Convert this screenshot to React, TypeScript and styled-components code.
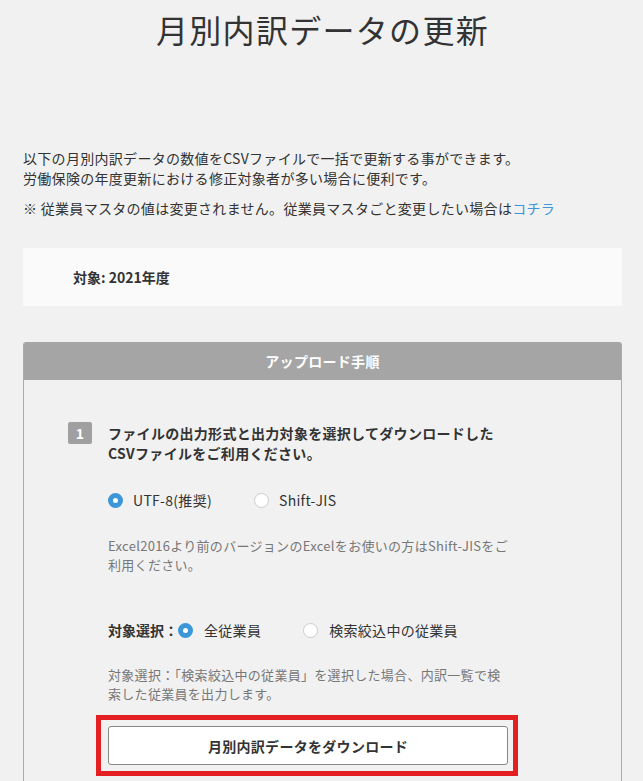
import styled, { createGlobalStyle } from "styled-components";

const GlobalStyle = createGlobalStyle`
  html, body {
    margin: 0;
    padding: 0;
    background-color: #f1f1f1;
  }
  body {
    font-family: "Noto Sans CJK JP", "Noto Sans", sans-serif;
    color: #333333;
    letter-spacing: 0.3px;
  }
  * {
    box-sizing: border-box;
  }
`;

function App() {
  return (
    <>
      <GlobalStyle />
      <Page>
        <Title>月別内訳データの更新</Title>
        <Lead>
          以下の月別内訳データの数値をCSVファイルで一括で更新する事ができます。
          <br />
          労働保険の年度更新における修正対象者が多い場合に便利です。
        </Lead>
        <Note>
          ※ 従業員マスタの値は変更されません。従業員マスタごと変更したい場合は
          <Link href="#">コチラ</Link>
        </Note>
        <Target>対象: 2021年度</Target>
        <Panel>
          <PanelHeader>アップロード手順</PanelHeader>
          <PanelBody>
            <Step>
              <StepNo>1</StepNo>
              <StepContent>
                <StepTitle>
                  ファイルの出力形式と出力対象を選択してダウンロードしたCSVファイルをご利用ください。
                </StepTitle>
                <RadioRow $top={27}>
                  <Choice $gap={42}>
                    <Radio type="radio" name="enc" defaultChecked />
                    UTF-8(推奨)
                  </Choice>
                  <Choice>
                    <Radio type="radio" name="enc" />
                    Shift-JIS
                  </Choice>
                </RadioRow>
                <Help $top={26}>
                  Excel2016より前のバージョンのExcelをお使いの方はShift-JISをご利用ください。
                </Help>
                <RadioRow $top={46}>
                  <RowLabel>対象選択：</RowLabel>
                  <Choice $gap={42} $space={11}>
                    <Radio type="radio" name="target" defaultChecked />
                    全従業員
                  </Choice>
                  <Choice $space={11}>
                    <Radio type="radio" name="target" />
                    検索絞込中の従業員
                  </Choice>
                </RadioRow>
                <Help $top={25}>
                  対象選択：「検索絞込中の従業員」を選択した場合、内訳一覧で検索した従業員を出力します。
                </Help>
                <Highlight>
                  <DownloadButton>月別内訳データをダウンロード</DownloadButton>
                </Highlight>
              </StepContent>
            </Step>
          </PanelBody>
        </Panel>
      </Page>
    </>
  );
}

export default App;

const Page = styled.div`
  padding: 6px 21px 40px 23px;
`;

const Title = styled.h1`
  margin: 0;
  text-align: center;
  font-size: 32px;
  font-weight: 400;
  line-height: 46px;
  letter-spacing: 1.3px;
  color: #333333;
`;

const Lead = styled.p`
  margin: 96px 0 0;
  font-size: 14px;
  line-height: 20px;
`;

const Note = styled.p`
  margin: 10px 0 0;
  font-size: 14px;
  line-height: 20px;
`;

const Link = styled.a`
  color: #3b97d8;
  text-decoration: none;
`;

const Target = styled.div`
  display: flex;
  align-items: center;
  height: 58px;
  margin-top: 30px;
  padding-left: 50px;
  background-color: #fafafa;
  font-size: 14px;
  font-weight: 700;
  letter-spacing: 0;
`;

const Panel = styled.div`
  margin-top: 36px;
  border: 1px solid #aaaaaa;
  border-top: none;
  border-radius: 3px 3px 0 0;
  overflow: hidden;
`;

const PanelHeader = styled.div`
  height: 38px;
  line-height: 38px;
  background-color: #a5a5a5;
  color: #ffffff;
  text-align: center;
  font-size: 14px;
  font-weight: 700;
`;

const PanelBody = styled.div`
  padding: 42px 0 30px 44px;
`;

const Step = styled.div`
  display: flex;
  align-items: flex-start;
  gap: 16px;
`;

const StepNo = styled.div`
  flex: none;
  width: 24px;
  height: 22px;
  border-radius: 2px;
  background-color: #a0a0a0;
  color: #ffffff;
  font-size: 14px;
  font-weight: 700;
  line-height: 22px;
  text-align: center;
`;

const StepContent = styled.div`
  width: 402px;
`;

const StepTitle = styled.div`
  margin-top: 1px;
  font-size: 14px;
  font-weight: 700;
  line-height: 20px;
`;

const RadioRow = styled.div<{ $top: number }>`
  display: flex;
  align-items: center;
  margin-top: ${(p) => p.$top}px;
  height: 20px;
  font-size: 14px;
`;

const RowLabel = styled.span`
  font-weight: 700;
  letter-spacing: 0;
`;

const Choice = styled.label<{ $gap?: number; $space?: number }>`
  display: flex;
  align-items: center;
  gap: ${(p) => p.$space ?? 10}px;
  margin-right: ${(p) => p.$gap ?? 0}px;
  cursor: pointer;
`;

const Radio = styled.input`
  appearance: none;
  margin: 0;
  width: 15px;
  height: 15px;
  border-radius: 50%;
  border: 1px solid #cccccc;
  background-color: #ffffff;

  &:checked {
    border: 5px solid #3b97d8;
  }
`;

const Help = styled.p<{ $top: number }>`
  margin: ${(p) => p.$top}px 0 0;
  font-size: 13px;
  line-height: 19px;
  color: #777777;
`;

const Highlight = styled.div`
  margin: 12px 0 0 -12px;
  width: 422px;
  padding: 6px 5px 6px 7px;
  border: 5px solid #e41f22;
`;

const DownloadButton = styled.button`
  display: block;
  width: 400px;
  height: 39px;
  background-color: #ffffff;
  border: 1px solid #888888;
  border-radius: 3px;
  font-family: inherit;
  font-size: 14px;
  font-weight: 700;
  letter-spacing: 0.3px;
  color: #333333;
  cursor: pointer;
`;
